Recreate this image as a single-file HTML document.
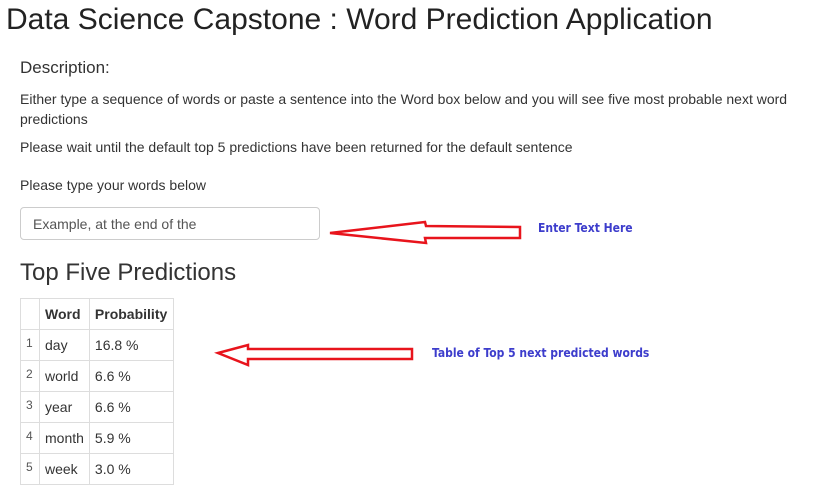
<!DOCTYPE html>
<html><head><style>
body{margin:0;width:823px;height:495px;background:#fff;font-family:"Liberation Sans",sans-serif;color:#333;position:relative;overflow:hidden}
.a{position:absolute;white-space:nowrap}
table{position:absolute;left:20px;top:298px;border-collapse:collapse;font-size:14px}
td,th{border:1px solid #ddd;padding:0 5px;height:30px;text-align:left}
th{font-weight:bold}
th:last-child,td:last-child{padding-right:6px}
td.n{font-size:12px;color:#555;vertical-align:top;padding-top:6px;height:24px}
.b{color:#3d3dcc;font-weight:bold;font-size:12px;font-family:"DejaVu Sans Condensed","Liberation Sans Narrow",sans-serif}
</style></head><body>
<div class="a" style="left:6px;top:3px;font-size:30px;color:#222">Data Science Capstone : Word Prediction Application</div>
<div class="a" style="left:20px;top:58px;font-size:17px">Description:</div>
<div class="a" style="left:20px;top:89px;font-size:14px;line-height:20px;white-space:normal;width:790px">Either type a sequence of words or paste a sentence into the Word box below and you will see five most probable next word predictions</div>
<div class="a" style="left:20px;top:139px;font-size:14px">Please wait until the default top 5 predictions have been returned for the default sentence</div>
<div class="a" style="left:20px;top:177px;font-size:14px">Please type your words below</div>
<div class="a" style="left:20px;top:207px;width:300px;height:33px;border:1px solid #ccc;border-radius:4px;box-sizing:border-box"></div>
<div class="a" style="left:33px;top:216px;font-size:14px;color:#555">Example, at the end of the</div>
<div class="a" style="left:20px;top:259px;font-size:24px">Top Five Predictions</div>
<svg class="a" style="left:0;top:0" width="823" height="495">
<polygon points="330,233 425,222 426,226 520,227 520,238 425,238 426,243" fill="none" stroke="#e8141c" stroke-width="2.5"/>
<polygon points="218,353 248,345 248,349 412,349 412,359 248,359 248,365" fill="none" stroke="#e8141c" stroke-width="2.5"/>
</svg>
<div class="a b" style="left:538px;top:221px">Enter Text Here</div>
<div class="a b" style="left:432px;top:346px">Table of Top 5 next predicted words</div>
<table>
<tr><th style="width:8px"></th><th>Word</th><th>Probability</th></tr>
<tr><td class="n">1</td><td>day</td><td>16.8 %</td></tr>
<tr><td class="n">2</td><td>world</td><td>6.6 %</td></tr>
<tr><td class="n">3</td><td>year</td><td>6.6 %</td></tr>
<tr><td class="n">4</td><td>month</td><td>5.9 %</td></tr>
<tr><td class="n">5</td><td>week</td><td>3.0 %</td></tr>
</table>
</body></html>
